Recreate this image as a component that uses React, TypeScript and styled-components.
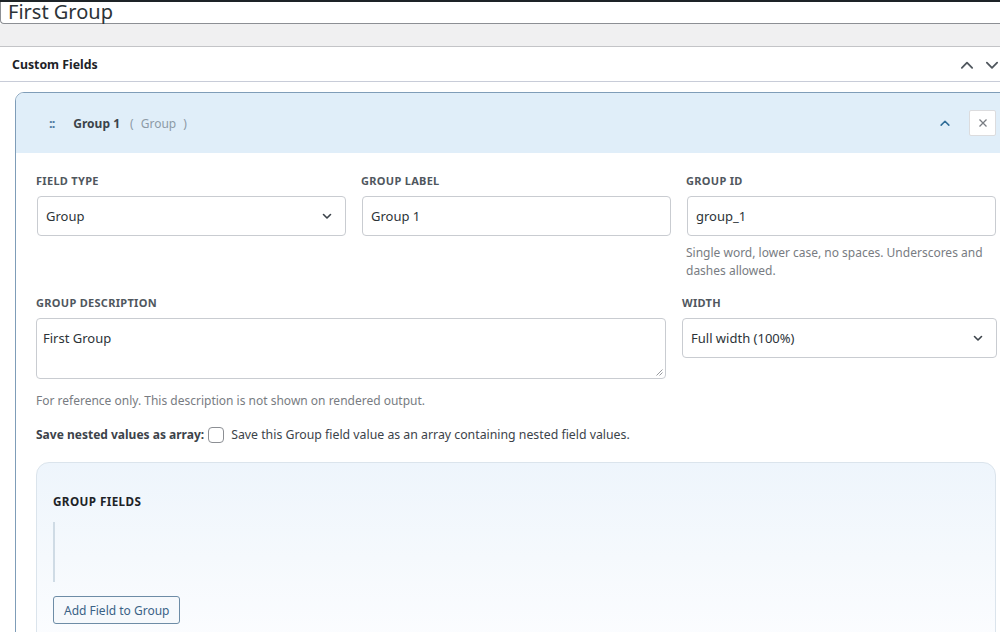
import React from "react";
import styled, { createGlobalStyle } from "styled-components";

const Global = createGlobalStyle`
  html, body { margin: 0; padding: 0; background: #fff; }
  body { font-family: "Noto Sans", "Open Sans", sans-serif; color: #2c3338; overflow: hidden; }
  #root { width: 1000px; height: 632px; overflow: hidden; }
  * { box-sizing: border-box; }
`;

const Page = styled.div`
  width: 1000px;
  display: flex;
  flex-direction: column;
`;

const TitleWrap = styled.div`
  border-top: 2px solid #1d2327;
  height: 24px;
`;

const TitleInput = styled.div`
  height: 22px;
  border-left: 1px solid #8c8f94;
  border-bottom: 1px solid #8c8f94;
  border-bottom-left-radius: 4px;
  padding-left: 7px;
  font-size: 20px;
  line-height: 20px;
  color: #2c3338;
  display: flex;
  align-items: flex-start;
`;

const GrayBand = styled.div`
  height: 22px;
  background: #f0f0f1;
`;

const Panel = styled.div`
  border-top: 1px solid #c3c4c7;
  width: 1020px;
`;

const PanelHeader = styled.div`
  height: 35px;
  border-bottom: 1px solid #c8ccd8;
  display: flex;
  align-items: center;
  padding-left: 12px;
  padding-right: 20px;
`;

const PanelTitle = styled.h2`
  margin: 0;
  flex: 1;
  font-size: 12.3px;
  font-weight: 700;
  color: #1d2327;
`;

const HeaderArrows = styled.div`
  display: flex;
  gap: 9px;
  color: #50575e;
  margin-top: 2px;
`;

const PanelBody = styled.div`
  padding: 10px 0 0 15px;
`;

const Card = styled.div`
  width: 1003px;
  border: 1px solid #7f9db8;
  border-top-left-radius: 9px;
  background: #fff;
`;

const CardHeader = styled.div`
  height: 60px;
  background: #e0eef9;
  border-top-left-radius: 8px;
  display: flex;
  align-items: center;
  padding: 0 21px 0 33px;
`;

const Handle = styled.span`
  font-size: 13px;
  font-weight: 700;
  color: #4f7aa0;
  margin-right: 19px;
  letter-spacing: -1px;
`;

const GroupName = styled.span`
  font-size: 12px;
  font-weight: 700;
  color: #3c434a;
`;

const GroupType = styled.span`
  font-size: 12px;
  color: #8c9aa6;
  margin-left: 10px;
  word-spacing: 4px;
  flex: 1;
`;

const CollapseBtn = styled.span`
  display: flex;
  color: #2f6d98;
  margin-right: 18px;
`;

const CloseBtn = styled.span`
  width: 27px;
  height: 26px;
  background: #fff;
  border: 1px solid #dcdcde;
  border-radius: 2px;
  display: flex;
  align-items: center;
  justify-content: center;
  color: #787c82;
`;

const CardBody = styled.div`
  padding: 20px 21px 0 20px;
  display: flex;
  flex-direction: column;
`;

const FieldRow = styled.div<{ $cols: string; $gap: number; $mt?: number }>`
  display: grid;
  grid-template-columns: ${(p) => p.$cols};
  column-gap: ${(p) => p.$gap}px;
  align-items: start;
  margin-top: ${(p) => p.$mt ?? 0}px;
`;

const Field = styled.div`
  display: flex;
  flex-direction: column;
`;

const Label = styled.label`
  font-size: 11px;
  font-weight: 700;
  letter-spacing: 0.3px;
  color: #50575e;
  line-height: 15px;
  margin-bottom: 8px;
  text-transform: uppercase;
`;

const Box = styled.div<{ $h?: number; $indent?: number }>`
  height: ${(p) => p.$h ?? 40}px;
  border: 1px solid #c9ccd1;
  border-radius: 4px;
  margin-left: ${(p) => p.$indent ?? 0}px;
  display: flex;
  align-items: ${(p) => (p.$h && p.$h > 45 ? "flex-start" : "center")};
  padding: ${(p) => (p.$h && p.$h > 45 ? "10px 8px 0 6px" : "0 12px 0 8px")};
  font-size: 13px;
  color: #2c3338;
  position: relative;
  background: #fff;
`;

const BoxText = styled.span`
  flex: 1;
`;

const Grip = styled.svg`
  position: absolute;
  right: 2px;
  bottom: 2px;
`;

const Help = styled.p<{ $mt: number }>`
  margin: ${(p) => p.$mt}px 0 0 0;
  font-size: 12px;
  line-height: 18px;
  color: #787c82;
`;

const CheckRow = styled.div`
  display: flex;
  align-items: center;
  margin-top: 16px;
  font-size: 12.3px;
`;

const CheckLabel = styled.span`
  font-size: 12px;
  font-weight: 700;
  color: #3c434a;
`;

const Check = styled.span`
  width: 16px;
  height: 16px;
  border: 1px solid #8c8f94;
  border-radius: 4px;
  margin: 0 7px 0 4px;
  background: #fff;
`;

const CheckText = styled.span`
  color: #3c434a;
`;

const GroupFields = styled.div`
  margin-top: 19px;
  height: 190px;
  border: 1px solid #dbe4ec;
  border-radius: 13px;
  background: linear-gradient(180deg, #eef5fc 0%, #f5f9fd 50%, #fcfdff 100%);
  padding: 30px 16px 0 16px;
  display: flex;
  flex-direction: column;
  align-items: flex-start;
`;

const GroupFieldsTitle = styled.h3`
  margin: 0;
  font-size: 11.7px;
  font-weight: 700;
  letter-spacing: 0.4px;
  color: #1d2327;
  line-height: 16px;
`;

const DropZone = styled.div`
  margin-top: 13px;
  height: 60px;
  width: 100%;
  border-left: 2px solid #cfdbe5;
`;

const AddButton = styled.button`
  margin-top: 14px;
  height: 28px;
  padding: 0 10px;
  border: 1px solid #6d8ca6;
  border-radius: 3px;
  background: #f6f9fc;
  color: #3a6286;
  font-family: inherit;
  font-size: 12px;
`;

const Chevron = ({ up, size = 14, w = 2 }: { up?: boolean; size?: number; w?: number }) => (
  <svg width={size} height={size} viewBox="0 0 14 14" fill="none" stroke="currentColor" strokeWidth={w} strokeLinecap="round" strokeLinejoin="round">
    {up ? <path d="M2.5 9.5L7 5l4.5 4.5" /> : <path d="M2.5 5L7 9.5 11.5 5" />}
  </svg>
);

const SelectChevron = () => (
  <svg width="12" height="12" viewBox="0 0 12 12" fill="none" stroke="#3c434a" strokeWidth="1.6" strokeLinecap="round" strokeLinejoin="round">
    <path d="M2.5 4.5L6 8l3.5-3.5" />
  </svg>
);

export default function App() {
  return (
    <Page>
      <Global />
      <TitleWrap>
        <TitleInput>First Group</TitleInput>
      </TitleWrap>
      <GrayBand />
      <Panel>
        <PanelHeader>
          <PanelTitle>Custom Fields</PanelTitle>
          <HeaderArrows>
            <Chevron up size={16} w={1.6} />
            <Chevron size={16} w={1.6} />
          </HeaderArrows>
        </PanelHeader>
        <PanelBody>
          <Card>
            <CardHeader>
              <Handle>::</Handle>
              <GroupName>Group 1</GroupName>
              <GroupType>( Group )</GroupType>
              <CollapseBtn>
                <Chevron up size={12} w={1.8} />
              </CollapseBtn>
              <CloseBtn>
                <svg width="10" height="10" viewBox="0 0 10 10" stroke="currentColor" strokeWidth="1.3">
                  <path d="M1.5 1.5l7 7M8.5 1.5l-7 7" />
                </svg>
              </CloseBtn>
            </CardHeader>
            <CardBody>
              <FieldRow $cols="310px 310px 310px" $gap={15}>
                <Field>
                  <Label>Field Type</Label>
                  <Box $indent={1}>
                    <BoxText>Group</BoxText>
                    <SelectChevron />
                  </Box>
                </Field>
                <Field>
                  <Label>Group Label</Label>
                  <Box $indent={1}>
                    <BoxText>Group 1</BoxText>
                  </Box>
                </Field>
                <Field>
                  <Label>Group ID</Label>
                  <Box $indent={1}>
                    <BoxText>group_1</BoxText>
                  </Box>
                  <Help $mt={8}>Single word, lower case, no spaces. Underscores and dashes allowed.</Help>
                </Field>
              </FieldRow>
              <FieldRow $cols="630px 315px" $gap={16} $mt={15}>
                <Field>
                  <Label>Group Description</Label>
                  <Box $h={61}>
                    <BoxText>First Group</BoxText>
                    <Grip width="7" height="7" viewBox="0 0 7 7" stroke="#8c8f94" strokeWidth="0.9">
                      <path d="M6.5 0.5L0.5 6.5M6.5 3.5L3.5 6.5" />
                    </Grip>
                  </Box>
                </Field>
                <Field>
                  <Label>Width</Label>
                  <Box>
                    <BoxText>Full width (100%)</BoxText>
                    <SelectChevron />
                  </Box>
                </Field>
              </FieldRow>
              <Help $mt={13}>For reference only. This description is not shown on rendered output.</Help>
              <CheckRow>
                <CheckLabel>Save nested values as array:</CheckLabel>
                <Check />
                <CheckText>Save this Group field value as an array containing nested field values.</CheckText>
              </CheckRow>
              <GroupFields>
                <GroupFieldsTitle>GROUP FIELDS</GroupFieldsTitle>
                <DropZone />
                <AddButton>Add Field to Group</AddButton>
              </GroupFields>
            </CardBody>
          </Card>
        </PanelBody>
      </Panel>
    </Page>
  );
}
